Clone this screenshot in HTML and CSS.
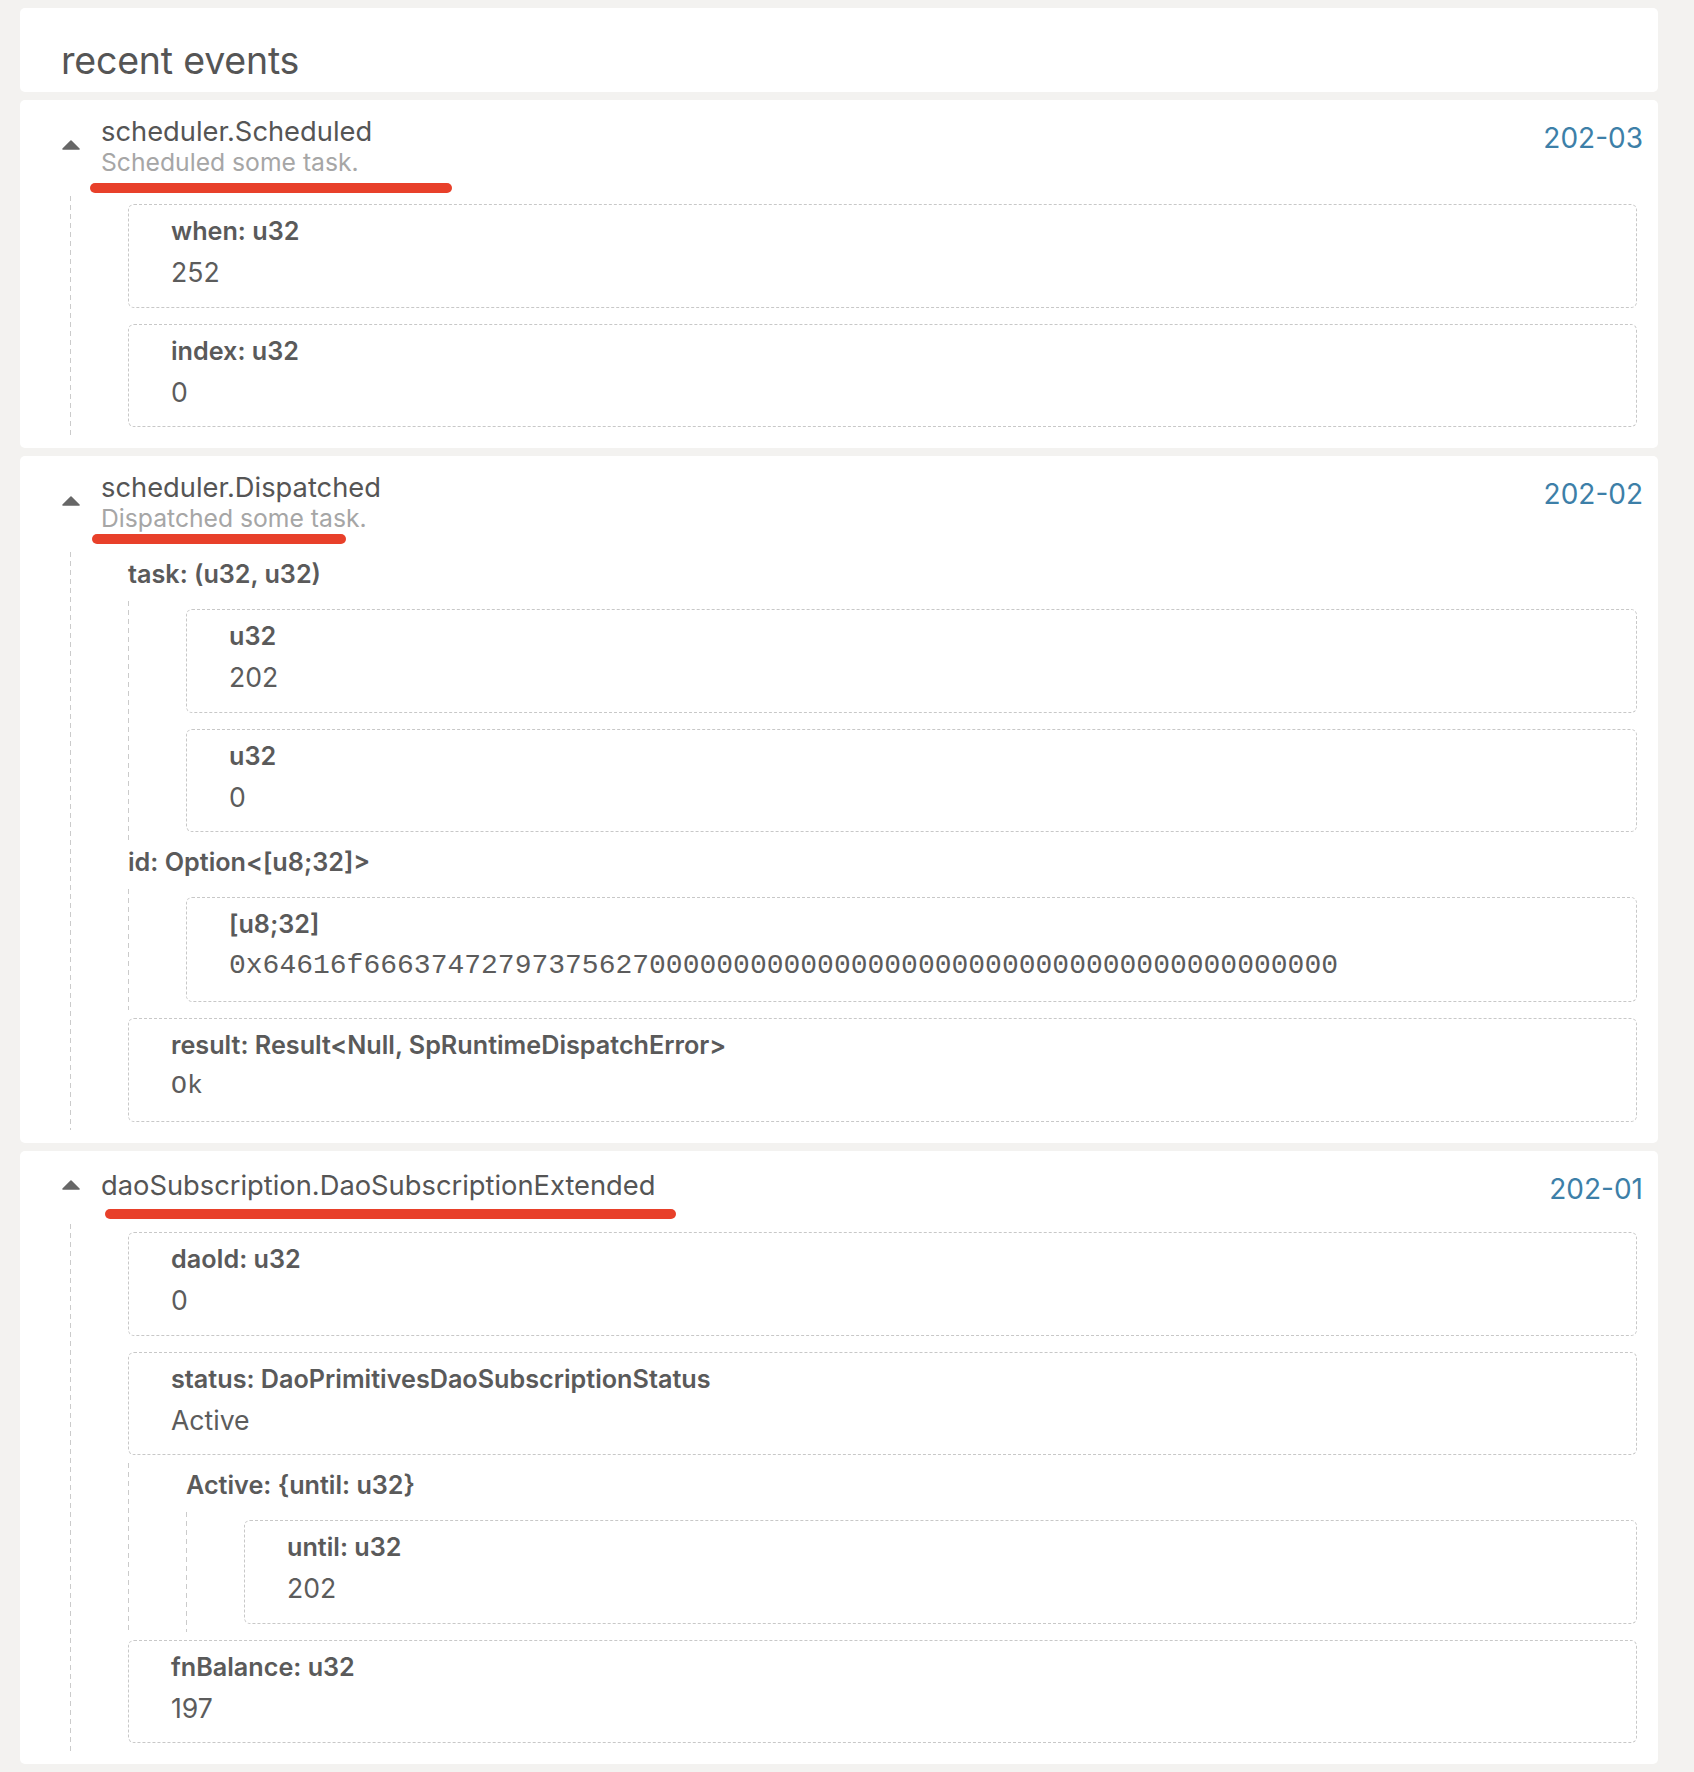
FILE: index.html
```html
<!DOCTYPE html>
<html lang="en">
<head>
<meta charset="utf-8">
<title>recent events</title>
<link rel="stylesheet" href="styles.css">
</head>
<body>
<div class="page">
  <section class="panel panel-head">
    <h2 class="heading">recent events</h2>
  </section>

  <section class="panel event">
    <div class="event-head">
      <svg class="caret" viewBox="0 0 18 10" width="18" height="10"><path d="M9 1 L17 9 H1 Z"/></svg>
      <div class="event-title">
        <div class="event-name">scheduler.Scheduled</div>
        <div class="event-doc">Scheduled some task.</div>
        <span class="mark mark-scheduled"></span>
      </div>
      <div class="event-date">202-03</div>
    </div>
    <div class="tree">
      <div class="field">
        <div class="field-label">when: u32</div>
        <div class="field-value">252</div>
      </div>
      <div class="field">
        <div class="field-label">index: u32</div>
        <div class="field-value">0</div>
      </div>
    </div>
  </section>

  <section class="panel event">
    <div class="event-head">
      <svg class="caret" viewBox="0 0 18 10" width="18" height="10"><path d="M9 1 L17 9 H1 Z"/></svg>
      <div class="event-title">
        <div class="event-name">scheduler.Dispatched</div>
        <div class="event-doc">Dispatched some task.</div>
        <span class="mark mark-dispatched"></span>
      </div>
      <div class="event-date">202-02</div>
    </div>
    <div class="tree">
      <div class="group">
        <div class="group-label">task: (u32, u32)</div>
        <div class="tree tree-nested">
          <div class="field">
            <div class="field-label">u32</div>
            <div class="field-value">202</div>
          </div>
          <div class="field">
            <div class="field-label">u32</div>
            <div class="field-value">0</div>
          </div>
        </div>
      </div>
      <div class="group">
        <div class="group-label">id: Option&lt;[u8;32]&gt;</div>
        <div class="tree tree-nested">
          <div class="field">
            <div class="field-label">[u8;32]</div>
            <div class="field-value mono hex">0x64616f6663747279737562700000000000000000000000000000000000000000</div>
          </div>
        </div>
      </div>
      <div class="field">
        <div class="field-label">result: Result&lt;Null, SpRuntimeDispatchError&gt;</div>
        <div class="field-value mono">Ok</div>
      </div>
    </div>
  </section>

  <section class="panel event">
    <div class="event-head">
      <svg class="caret" viewBox="0 0 18 10" width="18" height="10"><path d="M9 1 L17 9 H1 Z"/></svg>
      <div class="event-title">
        <div class="event-name">daoSubscription.DaoSubscriptionExtended</div>
        <span class="mark mark-extended"></span>
      </div>
      <div class="event-date">202-01</div>
    </div>
    <div class="tree">
      <div class="field">
        <div class="field-label">daoId: u32</div>
        <div class="field-value">0</div>
      </div>
      <div class="field">
        <div class="field-label">status: DaoPrimitivesDaoSubscriptionStatus</div>
        <div class="field-value">Active</div>
      </div>
      <div class="tree tree-nested">
        <div class="group">
          <div class="group-label">Active: {until: u32}</div>
          <div class="tree tree-nested">
            <div class="field">
              <div class="field-label">until: u32</div>
              <div class="field-value">202</div>
            </div>
          </div>
        </div>
      </div>
      <div class="field">
        <div class="field-label">fnBalance: u32</div>
        <div class="field-value">197</div>
      </div>
    </div>
  </section>
</div>
</body>
</html>
```

FILE: styles.css
```css
html, body {
  margin: 0;
  padding: 0;
  background: #f3f2f0;
}

body {
  font-family: Inter, "Noto Sans", Roboto, sans-serif;
  color: #5a5a5a;
}

.page {
  width: 1638px;
  padding: 8px 0 0 20px;
  display: flex;
  flex-direction: column;
  gap: 8px;
}

.panel {
  background: #ffffff;
  border-radius: 5px;
}

.panel-head {
  padding: 31px 41px 9px;
}

.heading {
  margin: 0;
  font-size: 37.5px;
  line-height: 44px;
  font-weight: 400;
  color: #555555;
  letter-spacing: -0.2px;
}

.event {
  position: relative;
  padding: 15px 15px 13px 42px;
}

.event-head {
  display: flex;
  align-items: center;
  margin-bottom: 18px;
}

.caret {
  flex: none;
  margin-right: 21px;
  margin-top: -3px;
}

.caret path {
  fill: #676767;
  stroke: #676767;
  stroke-width: 1.6;
  stroke-linejoin: round;
}

.event-title {
  position: relative;
  flex: 1;
}

.event-name {
  font-size: 27.3px;
  line-height: 34px;
  color: #555555;
}

.event-doc {
  font-size: 24.7px;
  line-height: 26px;
  padding-bottom: 3px;
  color: #a6a6a6;
}

.event-date {
  align-self: flex-start;
  margin-top: 6px;
  font-size: 28px;
  line-height: 34px;
  color: #3d7fa8;
}

.mark {
  position: absolute;
  height: 10px;
  border-radius: 5px;
  background: #e8402a;
}

.mark-scheduled {
  left: -11px;
  width: 362px;
  top: calc(100% + 5px);
}

.mark-dispatched {
  left: -9px;
  width: 254px;
  top: calc(100% + 0px);
}

.mark-extended {
  left: 4px;
  width: 571px;
  top: calc(100% + 6px);
}

.tree {
  display: flex;
  flex-direction: column;
  padding-left: 58px;
  margin-left: 8px;
  margin-right: 6px;
  background-image: repeating-linear-gradient(to bottom, #cbcbcb 0 5px, transparent 5px 9px);
  background-size: 1px 100%;
  background-repeat: no-repeat;
  background-position: left top;
}

.tree-nested {
  margin-left: 0;
  margin-right: 0;
}

.field {
  margin: 8px 0;
  border: 1px dashed #c8c8c8;
  border-radius: 6px;
  padding: 12px 20px 17.5px 42px;
}

.field-label,
.group-label {
  font-size: 25.2px;
  line-height: 28px;
  font-weight: 600;
  color: #5a5a5a;
}

.group-label {
  padding: 8px 0 13px;
}

.field-value {
  margin-top: 10px;
  font-size: 26.6px;
  line-height: 34px;
  color: #5c5c5c;
}

.mono {
  font-family: "Liberation Mono", "DejaVu Sans Mono", monospace;
  font-size: 26.5px;
  line-height: 35px;
}

.hex {
  font-size: 28px;
}
```
